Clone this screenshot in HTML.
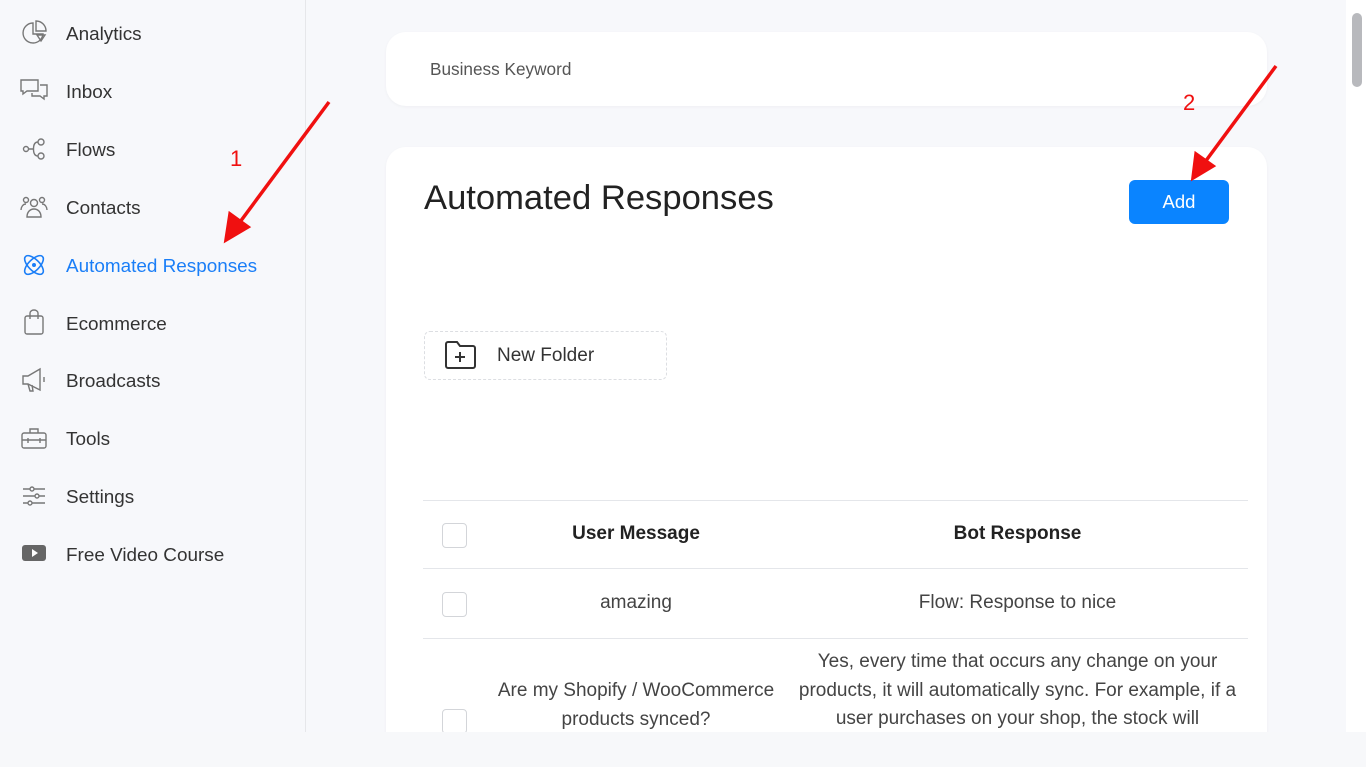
<!DOCTYPE html>
<html><head><meta charset="utf-8"><style>
*{margin:0;padding:0;box-sizing:border-box}
body{width:1366px;height:767px;overflow:hidden;background:#f7f8fa;font-family:"Liberation Sans",sans-serif;position:relative;color:#333}
.abs{position:absolute}
#side{left:0;top:0;width:306px;height:732px;background:#f7f8fb;border-right:1px solid #e6e7ea}
#main{left:306px;top:0;width:1040px;height:732px;background:#f7f8fb}
.nav{position:absolute;left:66px;font-size:18.9px;color:#333;line-height:20px}
.ic{position:absolute;left:20px;width:28px;height:28px}
.card{position:absolute;background:#fff;border-radius:20px;box-shadow:0 1px 3px rgba(0,0,0,0.04)}
.cb{position:absolute;left:442px;width:25px;height:25px;border:1px solid #d3d5d9;border-radius:4px;background:#fff}
.hr{position:absolute;left:423px;width:825px;height:1px;background:#e4e6ea}
.c{position:absolute;text-align:center;font-size:19px;color:#444;line-height:28.5px}
</style></head><body>
<div id="side" class="abs"></div>
<div id="main" class="abs"></div>
<div class="abs" style="left:1346px;top:0;width:20px;height:732px;background:#fff"></div>
<div class="abs" style="left:1352px;top:13px;width:10px;height:74px;background:#b8b9bd;border-radius:5px"></div>

<svg class="ic" style="top:19px" viewBox="0 0 28 28" fill="none" stroke="#777" stroke-width="1.4"><path d="M13 4a10 10 0 1 0 10 11H13z"/><path d="M16 2v10h10A10 10 0 0 0 16 2z"/><path d="M17 16l4 6 4-6z"/></svg>
<div class="nav" style="top:25px">Analytics</div>
<svg class="ic" style="top:77px" viewBox="0 0 28 28" fill="none" stroke="#777" stroke-width="1.4"><path d="M1 3h17v11H7l-4 3v-3H1z"/><path d="M20 8h7v11h-3v3l-4-3h-8v-3"/></svg>
<div class="nav" style="top:83px">Inbox</div>
<svg class="ic" style="top:135px" viewBox="0 0 28 28" fill="none" stroke="#777" stroke-width="1.4"><circle cx="6" cy="14" r="2.5"/><circle cx="21" cy="7" r="3"/><circle cx="21" cy="21" r="3"/><path d="M8.5 14h5M13.5 14c0-5 2-7 4.5-7M13.5 14c0 5 2 7 4.5 7"/></svg>
<div class="nav" style="top:141px">Flows</div>
<svg class="ic" style="top:193px" viewBox="0 0 28 28" fill="none" stroke="#777" stroke-width="1.4"><circle cx="14" cy="10" r="3.5"/><path d="M7 24c0-5 3-8 7-8s7 3 7 8z"/><circle cx="6" cy="7" r="2.5"/><circle cx="22" cy="7" r="2.5"/><path d="M1 17c0-3 2-6 5-6M27 17c0-3-2-6-5-6"/></svg>
<div class="nav" style="top:199px">Contacts</div>
<svg class="ic" style="top:251px" viewBox="0 0 28 28" fill="none" stroke="#1a7ef7" stroke-width="1.6"><ellipse cx="14" cy="14" rx="12" ry="5.5" transform="rotate(45 14 14)"/><ellipse cx="14" cy="14" rx="12" ry="5.5" transform="rotate(-45 14 14)"/><circle cx="14" cy="14" r="1.2" fill="#1a7ef7"/></svg>
<div class="nav" style="top:257px;color:#1a7ef7">Automated Responses</div>
<svg class="ic" style="top:308px" viewBox="0 0 28 28" fill="none" stroke="#777" stroke-width="1.4"><rect x="5" y="8" width="18" height="18" rx="2"/><path d="M10 11V5a4 3 0 0 1 8 0v6"/></svg>
<div class="nav" style="top:315px">Ecommerce</div>
<svg class="ic" style="top:366px" viewBox="0 0 28 28" fill="none" stroke="#777" stroke-width="1.4"><path d="M3 10h5l12-7v21L8 18H3z"/><path d="M8 18l2 7h3l-1-6M24 11v5"/></svg>
<div class="nav" style="top:372px">Broadcasts</div>
<svg class="ic" style="top:424px" viewBox="0 0 28 28" fill="none" stroke="#777" stroke-width="1.4"><rect x="2" y="9" width="24" height="15" rx="2"/><path d="M10 9V5h8v4M2 16h24M8 14v5M20 14v5"/></svg>
<div class="nav" style="top:430px">Tools</div>
<svg class="ic" style="top:482px" viewBox="0 0 28 28" fill="none" stroke="#777" stroke-width="1.4"><path d="M3 7h22M3 14h22M3 21h22"/><circle cx="12" cy="7" r="2" fill="#f7f8fb"/><circle cx="17" cy="14" r="2" fill="#f7f8fb"/><circle cx="10" cy="21" r="2" fill="#f7f8fb"/></svg>
<div class="nav" style="top:488px">Settings</div>
<svg class="ic" style="top:540px" viewBox="0 0 28 28"><rect x="2" y="5" width="24" height="16" rx="3" fill="#666"/><path d="M12 9l6 4-6 4z" fill="#fff"/></svg>
<div class="nav" style="top:546px">Free Video Course</div>

<div class="card" style="left:386px;top:32px;width:881px;height:74px"></div>
<div class="abs" style="left:430px;top:59px;font-size:17.2px;color:#555">Business Keyword</div>

<div class="card" style="left:386px;top:147px;width:881px;height:620px;border-radius:20px 20px 0 0"></div>
<div class="abs" style="left:424px;top:179px;font-size:34.6px;color:#222">Automated Responses</div>
<div class="abs" style="left:1129px;top:180px;width:100px;height:44px;background:#0a84ff;border-radius:6px;color:#fff;font-size:18.5px;text-align:center;line-height:44px">Add</div>

<div class="abs" style="left:424px;top:331px;width:243px;height:49px;border:1px dashed #dcdee2;border-radius:6px"></div>
<svg class="abs" style="left:444px;top:340px" width="34" height="30" viewBox="0 0 34 30" fill="none" stroke="#333" stroke-width="2"><path d="M2 4a2 2 0 0 1 2-2h9l3 4h13a2 2 0 0 1 2 2v18a2 2 0 0 1-2 2H4a2 2 0 0 1-2-2z"/><path d="M16 12v10M11 17h10"/></svg>
<div class="abs" style="left:497px;top:345px;font-size:19px;color:#333">New Folder</div>

<div class="hr" style="top:500px"></div>
<div class="hr" style="top:568px"></div>
<div class="hr" style="top:638px"></div>
<div class="cb" style="top:523px"></div>
<div class="cb" style="top:592px"></div>
<div class="cb" style="top:709px"></div>
<div class="c" style="left:486px;width:300px;top:520px;font-weight:bold;color:#222">User Message</div>
<div class="c" style="left:800px;width:435px;top:520px;font-weight:bold;color:#222">Bot Response</div>
<div class="c" style="left:486px;width:300px;top:589px">amazing</div>
<div class="c" style="left:800px;width:435px;top:589px">Flow: Response to nice</div>
<div class="c" style="left:476px;width:320px;top:677px">Are my Shopify / WooCommerce<br>products synced?</div>
<div class="c" style="left:790px;width:455px;top:648px">Yes, every time that occurs any change on your products, it will automatically sync. For example, if a user purchases on your shop, the stock will</div>
<div class="abs" style="left:0;top:732px;width:1366px;height:35px;background:#f7f8fa"></div>

<svg class="abs" style="left:0;top:0" width="1366" height="767">
<g stroke="#f01010" stroke-width="3.5" fill="#f01010">
<path d="M329 102L240 222"/><path d="M226 240l4-26 18 13z"/>
<path d="M1276 66L1205 162"/><path d="M1193 178l3-24 17 12z"/>
</g>
<text x="230" y="166" fill="#f01010" font-size="22" font-family="Liberation Sans">1</text>
<text x="1183" y="110" fill="#f01010" font-size="22" font-family="Liberation Sans">2</text>
</svg>
</body></html>
